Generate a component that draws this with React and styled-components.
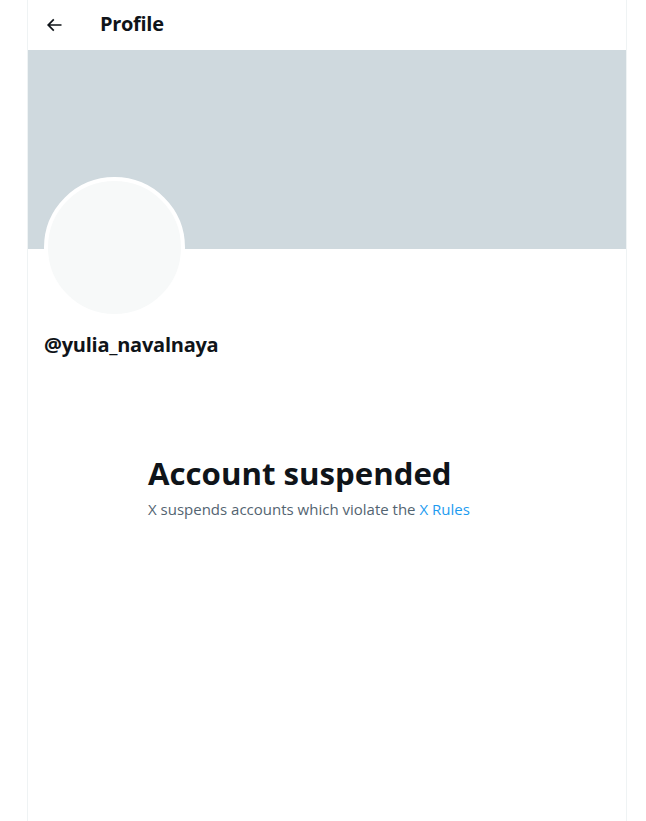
import React from "react";
import styled, { createGlobalStyle } from "styled-components";

const Global = createGlobalStyle`
  html, body { margin: 0; padding: 0; background: #fff; }
  body { font-family: "Segoe UI", "Open Sans", "Noto Sans", sans-serif; color: #0f1419; }
`;

const Page = styled.div`
  display: flex;
  padding-left: 27px;
`;

const Column = styled.main`
  width: 598px;
  min-height: 821px;
  border-left: 1px solid #eff3f4;
  border-right: 1px solid #eff3f4;
  display: flex;
  flex-direction: column;
`;

const Header = styled.header`
  height: 50px;
  display: flex;
  align-items: center;
  padding: 0 16px;
  gap: 36px;
`;

const BackButton = styled.button`
  width: 20px;
  height: 20px;
  padding: 0;
  border: 0;
  background: none;
  display: flex;
  align-items: center;
  justify-content: center;
  color: #0f1419;
  cursor: pointer;
`;

const Title = styled.h2`
  margin: 0;
  font-size: 20px;
  font-weight: 700;
  line-height: 24px;
  letter-spacing: -0.3px;
  transform: translateY(-1px);
`;

const Banner = styled.div`
  height: 199px;
  background: #cfd9de;
`;

const ProfileInfo = styled.div`
  padding: 0 16px;
  display: flex;
  flex-direction: column;
`;

const Avatar = styled.div`
  width: 133px;
  height: 133px;
  margin-top: -72px;
  border-radius: 50%;
  border: 4px solid #fff;
  background: #f7f9f9;
`;

const Handle = styled.div`
  margin-top: 15px;
  font-size: 20px;
  font-weight: 700;
  line-height: 24px;
  letter-spacing: -0.25px;
`;

const Empty = styled.section`
  width: 358px;
  margin: 98px auto 0;
  display: flex;
  flex-direction: column;
`;

const EmptyTitle = styled.h1`
  margin: 0;
  font-size: 31.2px;
  font-weight: 700;
  line-height: 36px;
  letter-spacing: 0;
`;

const EmptyText = styled.p`
  margin: 8px 0 0;
  font-size: 15px;
  line-height: 20px;
  color: #536471;
`;

const Link = styled.a`
  color: #1d9bf0;
  text-decoration: none;
`;

export default function App() {
  return (
    <>
      <Global />
      <Page>
        <Column>
          <Header>
            <BackButton aria-label="Back">
              <svg width="20" height="20" viewBox="0 0 24 24" fill="currentColor">
                <path d="M7.414 13l5.043 5.04-1.414 1.42L3.586 12l7.457-7.46 1.414 1.42L7.414 11H21v2H7.414z" />
              </svg>
            </BackButton>
            <Title>Profile</Title>
          </Header>
          <Banner />
          <ProfileInfo>
            <Avatar />
            <Handle>@yulia_navalnaya</Handle>
          </ProfileInfo>
          <Empty>
            <EmptyTitle>Account suspended</EmptyTitle>
            <EmptyText>
              X suspends accounts which violate the <Link href="#">X Rules</Link>
            </EmptyText>
          </Empty>
        </Column>
      </Page>
    </>
  );
}
